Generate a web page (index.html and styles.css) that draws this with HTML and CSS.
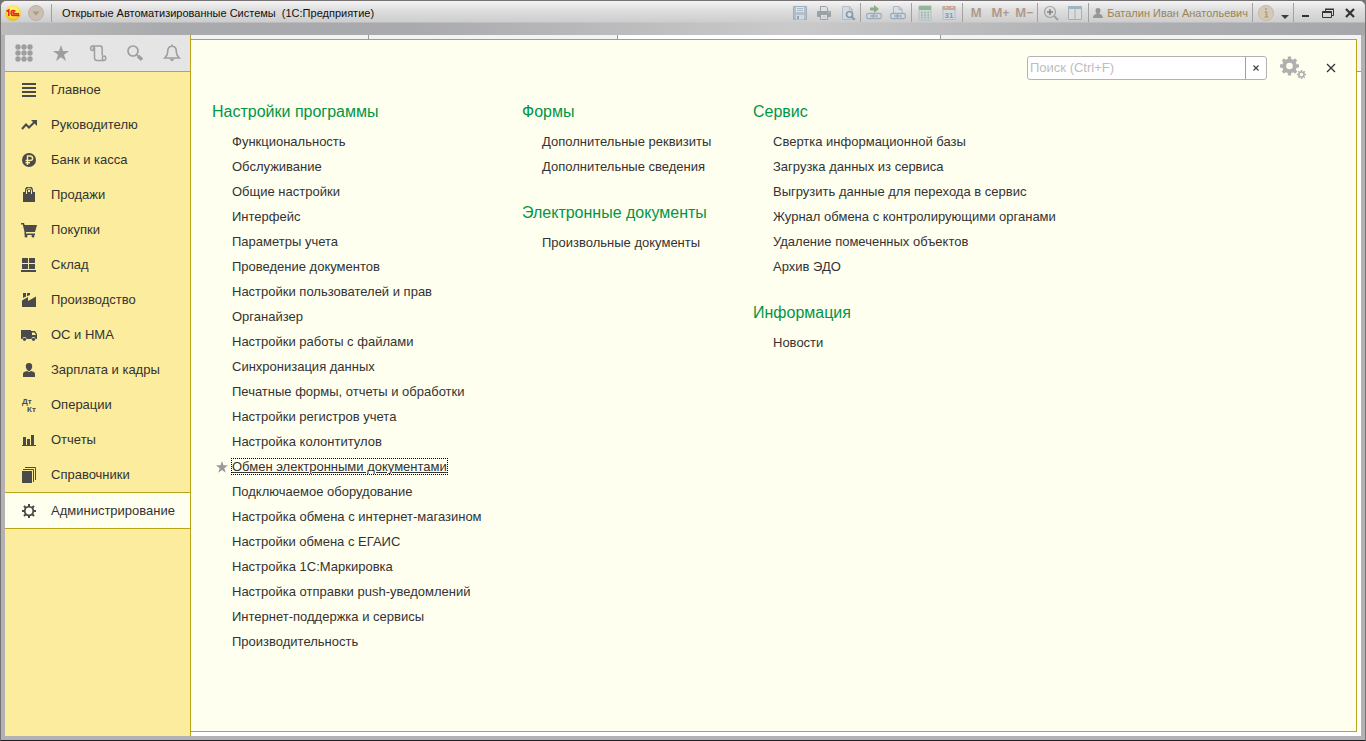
FILE: index.html
```html
<!DOCTYPE html>
<html lang="ru">
<head>
<meta charset="utf-8">
<title>Открытые Автоматизированные Системы (1С:Предприятие)</title>
<link rel="stylesheet" href="styles.css">
</head>
<body>
<div class="window">
  <header class="titlebar">
    <div class="title-left">
      <svg class="logo" viewBox="0 0 16 16" width="16" height="16"><defs><radialGradient id="lg" cx=".5" cy=".35" r=".65"><stop offset="0" stop-color="#fffab0"/><stop offset=".6" stop-color="#ffe53c"/><stop offset="1" stop-color="#e2b81c"/></radialGradient></defs><circle cx="8" cy="8" r="7.8" fill="url(#lg)"/><path d="M1.5 6.5 3.8 5v6M10.4 6.6C9.8 5 6 4.800 6 8c0 2.800 2 2.500 4 2.500h4.500M9.500 7.300c-2-.6-2 1.500-.5 1.500h5" fill="none" stroke="#e8231a" stroke-width="1.500"/></svg>
      <button class="round" aria-label="Главное меню"><svg viewBox="0 0 16 16" width="16" height="16"><circle cx="8" cy="8" r="7.500" fill="#c9bfb2" stroke="#bdb3a5"/><path d="M4.500 6.500h7L8 10.500z" fill="#a79b8b"/></svg></button>
      <h1 class="title">Открытые Автоматизированные Системы&nbsp; (1С:Предприятие)</h1>
    </div>
    <div class="group first muted">
      <button aria-label="Сохранить"><svg viewBox="0 0 16 16"><path d="M1.500 1.500h13v13h-13z" fill="#a9bac8" stroke="#8fa5b7"/><path d="M4 2h8v5H4z" fill="#dce3e8"/><path d="M5 3.500h6M5 5.500h6" stroke="#9db0bf"/><path d="M4 10h8v4.500H4z" fill="#d3dbe1"/><path d="M5 11h2v3H5z" fill="#7e97aa"/></svg></button>
      <button aria-label="Печать"><svg viewBox="0 0 16 16"><path d="M4.500 6V1.500H10l1.500 1.500v3" fill="#dfe2e4" stroke="#8b9299"/><rect x="1" y="6" width="14" height="6" rx="1" fill="#8b949c"/><path d="M4.500 9.500h7v5h-7z" fill="#dfe2e4" stroke="#8b949c"/><path d="M6 12h4M12 7.500h1.500" stroke="#b8c1c8"/></svg></button>
      <button aria-label="Предварительный просмотр"><svg viewBox="0 0 16 16"><path d="M2.500 1.500h7l3 3v10h-10z" fill="#d3dae0" stroke="#a7b7c4"/><path d="M9.500 1.500v3h3" fill="none" stroke="#a7b7c4"/><circle cx="9.500" cy="9.500" r="3" fill="#d7dfe6" stroke="#728a9e" stroke-width="1.700"/><path d="m11.700 11.700 3 3" stroke="#728a9e" stroke-width="2"/></svg></button>
    </div>
    <div class="group muted">
      <button aria-label="Получить ссылку"><svg viewBox="0 0 16 16"><path d="M4 2.500h4V0l5 4-5 4V5.500H4z" fill="#7a9e79"/><rect x=".7" y="8.500" width="8" height="5" rx="1.500" fill="#d9dfe4" stroke="#8fa3b3" stroke-width="1.300"/><rect x="7.300" y="8.500" width="8" height="5" rx="1.500" fill="#d9dfe4" stroke="#8fa3b3" stroke-width="1.300"/><path d="M4 11h8" stroke="#8698a6" stroke-width="1.300"/></svg></button>
      <button aria-label="Перейти по ссылке"><svg viewBox="0 0 16 16"><path d="M3.500 8V1.500H9l3 3V8" fill="#d9dfe4" stroke="#9aadbd"/><path d="M9 1.500v3h3" fill="none" stroke="#9aadbd"/><rect x=".7" y="8.500" width="8" height="5" rx="1.500" fill="#d9dfe4" stroke="#8ba2b4" stroke-width="1.300"/><rect x="7.300" y="8.500" width="8" height="5" rx="1.500" fill="#d9dfe4" stroke="#8ba2b4" stroke-width="1.300"/><path d="M4 11h8" stroke="#8397a7" stroke-width="1.300"/></svg></button>
    </div>
    <div class="group muted">
      <button aria-label="Калькулятор"><svg viewBox="0 0 16 16"><path d="M2 1h12v14H2z" fill="#ccd5da" stroke="#a9bac3"/><path d="M2 1h12v4H2z" fill="#82ab83"/><path d="M4 7.500h8M4 10h8M4 12.500h8" stroke="#82a887" stroke-width="1.400" stroke-dasharray="1.600"/></svg></button>
      <button aria-label="Календарь"><svg viewBox="0 0 16 16"><path d="M2 1.500h12v13H2z" fill="#d3dbe2" stroke="#a9b8c5"/><path d="M1.500 1h13v4h-13z" fill="#c39d87"/><path d="M4 2.500h2M10 2.500h2" stroke="#e6d8cf"/><text x="8" y="13" text-anchor="middle" class="day">31</text></svg></button>
    </div>
    <div class="group">
      <button class="mem">M</button><button class="mem">M+</button><button class="mem">M−</button>
    </div>
    <div class="group muted">
      <button aria-label="Масштаб"><svg viewBox="0 0 16 16"><circle cx="7" cy="7" r="5.500" fill="none" stroke="#929292" stroke-width="1.200"/><path d="M7 4v6M4 7h6" stroke="#666" stroke-width="1.400"/><path d="m11 11 4 4" stroke="#929292" stroke-width="2"/></svg></button>
      <button aria-label="Панели"><svg viewBox="0 0 16 16"><path d="M1.500 1.500h13v13h-13z" fill="#dadddf" stroke="#98a7b2"/><path d="M1 1h14v3H1z" fill="#93a9b9"/><path d="M8 4v10" stroke="#98a7b2"/></svg></button>
    </div>
    <div class="group user">
      <svg viewBox="0 0 16 16" width="10" height="12"><path d="M8 0c3 0 4 2 4 4S10.500 9 10 9.500c3 .5 6 2 6 6.500H0c0-4.500 3-6 6-6.500C5.500 9 4 6 4 4s1-4 4-4z" fill="#969696"/></svg>
      <a href="#" class="username">Баталин Иван Анатольевич</a>
    </div>
    <div class="group info">
      <button class="round" aria-label="Информация"><svg viewBox="0 0 16 16" width="16" height="16"><circle cx="8" cy="8" r="7.500" fill="#d5cab8" stroke="#c4b8a2"/><path d="M8 3v2M6.500 7H8.500v5M6.500 12h4" fill="none" stroke="#b3a283" stroke-width="1.700"/></svg></button>
      <button class="drop" aria-label="Ещё"><svg viewBox="0 0 16 16"><path d="M4 10h8l-4 4z" fill="#3d3d3d"/></svg></button>
    </div>
    <div class="group controls">
      <button aria-label="Свернуть"><svg viewBox="0 0 16 16"><path d="M4 11h7" stroke="#333" stroke-width="2"/></svg></button>
      <button aria-label="Восстановить"><svg viewBox="0 0 16 16"><path d="M5.500 6V4.500h8v6H12M5 4h9" fill="none" stroke="#333"/><path d="M2.500 6.500h9v6h-9zM2 7.500h9" fill="none" stroke="#333"/></svg></button>
      <button aria-label="Закрыть окно"><svg viewBox="0 0 16 16"><path d="m4 4 8 8M12 4l-8 8" stroke="#333" stroke-width="2.200"/></svg></button>
    </div>
  </header>

  <div class="workspace">
    <aside class="sidebar">
      <div class="tools">
        <button aria-label="Меню функций"><svg viewBox="0 0 18 18"><g fill="#9e9e9e"><circle cx="3" cy="3" r="2.700"/><circle cx="9" cy="3" r="2.700"/><circle cx="15" cy="3" r="2.700"/><circle cx="3" cy="9" r="2.700"/><circle cx="9" cy="9" r="2.700"/><circle cx="15" cy="9" r="2.700"/><circle cx="3" cy="15" r="2.700"/><circle cx="9" cy="15" r="2.700"/><circle cx="15" cy="15" r="2.700"/></g></svg></button>
        <button aria-label="Избранное"><svg viewBox="0 0 18 18"><path d="m9 1 2 6h6l-5 3.800 2 6.200-5-3.800L4 17l2-6.200L1 7h6z" fill="#9e9e9e"/></svg></button>
        <button aria-label="История"><svg viewBox="0 0 18 18"><path d="M3.500 6.500C1 6.500.8 2 3.500 2H11c2 0 2.200 1 2.200 2.500v7M3.500 2c1.500 0 2 1 2 2.500v9c0 2 1 3 2.500 3h6.500c3 0 3-4.500.5-4.500s-1.500 4-.5 4.500M3.500 6.500c1.500 0 1.500-2.500 0-2.500" fill="none" stroke="#9e9e9e" stroke-width="1.500"/></svg></button>
        <button aria-label="Поиск"><svg viewBox="0 0 18 18"><circle cx="7" cy="7" r="5" fill="none" stroke="#9e9e9e" stroke-width="1.700"/><path d="m10.500 10.500 2 2" stroke="#9e9e9e" stroke-width="1.500"/><path d="m12 12 4 3.800" stroke="#9e9e9e" stroke-width="3.500"/></svg></button>
        <button aria-label="Уведомления"><svg viewBox="0 0 18 18"><path d="M9 2.200c-3.500 0-4.300 2.500-4.300 5.300 0 4-1.200 4.500-3 6.500h14.600c-1.800-2-3-2.500-3-6.500 0-2.800-.8-5.300-4.300-5.300zM9 .5v2" fill="none" stroke="#9e9e9e" stroke-width="1.600"/><path d="M6.500 15h5L9 17.500z" fill="#9e9e9e"/></svg></button>
      </div>
      <nav class="sections" aria-label="Разделы">
        <a href="#"><svg viewBox="0 0 16 16"><path d="M1 2h14M1 6h14M1 10h14M1 14h14" stroke="#4a4a4a" stroke-width="2"/></svg>Главное</a>
        <a href="#"><svg viewBox="0 0 16 16"><path d="m1 12 4-4.500 3 3L13.500 5" fill="none" stroke="#4a4a4a" stroke-width="2"/><path d="M10 3h6v6z" fill="#4a4a4a"/></svg>Руководителю</a>
        <a href="#"><svg viewBox="0 0 16 16"><circle cx="8" cy="8" r="7" fill="#4a4a4a"/><path d="M6.500 13V4H9c3.500 0 3.500 4.500 0 4.500H4.500M4.500 10.700H9" fill="none" stroke="#fbec9e" stroke-width="1.400"/></svg>Банк и касса</a>
        <a href="#"><svg viewBox="0 0 16 16"><path d="M2 5h12v10H2z" fill="#4a4a4a"/><path d="M5.500 7.500V3.500c0-3.500 5-3.500 5 0v4" fill="none" stroke="#4a4a4a" stroke-width="3"/><path d="M5.500 7V3.500c0-3 5-3 5 0V7" fill="none" stroke="#fbec9e" stroke-width="1"/></svg>Продажи</a>
        <a href="#"><svg viewBox="0 0 16 16"><path d="M0 1h3l.6 2H16l-2 7H5v1.500h9V13H3.500v-3L1.800 2.500H0z" fill="#4a4a4a"/><circle cx="5" cy="14" r="1.500" fill="#4a4a4a"/><circle cx="12" cy="14" r="1.500" fill="#4a4a4a"/></svg>Покупки</a>
        <a href="#"><svg viewBox="0 0 16 16"><path d="M1 1h6v5H1zM8 1h6v5H8zM1 7h6v5H1zM8 7h6v5H8zM0 13h15v2H0z" fill="#4a4a4a"/></svg>Склад</a>
        <a href="#"><svg viewBox="0 0 16 16"><path d="M1 15V8.500L7 5v4l8-4.500V15zM2 1h3v3.500L2 6zM6 1h3v2L6 4.300z" fill="#4a4a4a"/></svg>Производство</a>
        <a href="#"><svg viewBox="0 0 16 16"><path d="M0 3h10v1h4l2 3v5H0z" fill="#4a4a4a"/><path d="M11 5.500h2.500L15 8h-4z" fill="#fbec9e"/><path d="M1.500 12a2 2 0 0 1 4 0zM10.500 12a2 2 0 0 1 4 0z" fill="#fbec9e"/><circle cx="3.500" cy="12.300" r="1.600" fill="#4a4a4a"/><circle cx="12.500" cy="12.300" r="1.600" fill="#4a4a4a"/></svg>ОС и НМА</a>
        <a href="#"><svg viewBox="0 0 16 16"><path d="M8 1c2.500 0 3.200 1.500 3.200 3.500S9.500 9 8 9 4.800 6.500 4.800 4.500 5.500 1 8 1zM2 15v-3c0-2 1.500-2.500 4-3l2 1 2-1c2.500.5 4 1 4 3v3z" fill="#4a4a4a"/></svg>Зарплата и кадры</a>
        <a href="#"><svg viewBox="0 0 16 16" class="dtkt"><text x="1" y="7">Дт</text><text x="6" y="15">Кт</text></svg>Операции</a>
        <a href="#"><svg viewBox="0 0 16 16"><path d="M1 13h14v1H1zM2 5h3v8H2zM6 7h3v6H6zM10 3h3v10h-3z" fill="#4a4a4a"/></svg>Отчеты</a>
        <a href="#"><svg viewBox="0 0 16 16"><path d="M1 4h10v12H1z" fill="#4a4a4a"/><path d="M2 2.500h10.500V15M4 .5h10.500V13" fill="none" stroke="#4a4a4a"/></svg>Справочники</a>
        <a href="#" class="active" aria-current="page"><svg viewBox="0 0 16 16"><circle cx="8" cy="8" r="4.300" fill="none" stroke="#4a4a4a" stroke-width="1.800"/><path d="M8 1v3M8 12v3M1 8h3M12 8h3M3 3l2 2M11 11l2 2M3 13l2-2M11 5l2-2" stroke="#4a4a4a" stroke-width="2"/></svg>Администрирование</a>
      </nav>
    </aside>

    <main class="main">
      <div class="tabs"><span class="tab t1"></span><span class="tab t2"></span><span class="tab t3"></span></div>
      <section class="panel">
        <div class="panel-head">
          <form class="search">
            <input type="text" placeholder="Поиск (Ctrl+F)" aria-label="Поиск">
            <button type="button" aria-label="Очистить"><svg viewBox="0 0 8 8" width="8" height="8"><path d="m1.500 1.500 5 5M6.500 1.500l-5 5" stroke="#444" stroke-width="1.200"/></svg></button>
          </form>
          <button class="gears" aria-label="Настройка"><svg viewBox="0 0 26 24" width="26" height="24"><g fill="none" stroke="#b0b0b0"><circle cx="9.500" cy="10" r="5.300" stroke-width="4"/><path d="M9.500.6v3.500M9.500 16v3.500M.1 10h3.500M15.400 10h3.500M2.900 3.400l2.400 2.400M13.700 14.200l2.400 2.400M2.900 16.600l2.400-2.400M13.700 5.800l2.400-2.400" stroke-width="3.400"/><circle cx="21.500" cy="18.500" r="2.500" stroke-width="1.600"/><path d="M21.500 14v2M21.500 21v2M17 18.500h2M24 18.500h2M18.300 15.300l1.400 1.400M23.300 20.300l1.400 1.400M18.300 21.700l1.400-1.400M23.300 16.700l1.400-1.400" stroke-width="1.500"/></g></svg></button>
          <button class="close" aria-label="Закрыть"><svg viewBox="0 0 10 10" width="10" height="10"><path d="m1 1 8 8M9 1 1 9" stroke="#333" stroke-width="1.300"/></svg></button>
        </div>
        <div class="columns">
          <div>
            <section class="block"><h2>Настройки программы</h2>
              <ul>
                <li><a href="#">Функциональность</a></li>
                <li><a href="#">Обслуживание</a></li>
                <li><a href="#">Общие настройки</a></li>
                <li><a href="#">Интерфейс</a></li>
                <li><a href="#">Параметры учета</a></li>
                <li><a href="#">Проведение документов</a></li>
                <li><a href="#">Настройки пользователей и прав</a></li>
                <li><a href="#">Органайзер</a></li>
                <li><a href="#">Настройки работы с файлами</a></li>
                <li><a href="#">Синхронизация данных</a></li>
                <li><a href="#">Печатные формы, отчеты и обработки</a></li>
                <li><a href="#">Настройки регистров учета</a></li>
                <li><a href="#">Настройка колонтитулов</a></li>
                <li class="focused"><svg viewBox="0 0 18 18" width="12" height="12"><path d="m9 0 2.200 6.500H18l-5.500 4.200 2 7L9 13.500l-5.500 4.200 2-7L0 6.500h6.800z" fill="#999"/></svg><a href="#">Обмен электронными документами</a></li>
                <li><a href="#">Подключаемое оборудование</a></li>
                <li><a href="#">Настройка обмена с интернет-магазином</a></li>
                <li><a href="#">Настройки обмена с ЕГАИС</a></li>
                <li><a href="#">Настройка 1С:Маркировка</a></li>
                <li><a href="#">Настройка отправки push-уведомлений</a></li>
                <li><a href="#">Интернет-поддержка и сервисы</a></li>
                <li><a href="#">Производительность</a></li>
              </ul>
            </section>
          </div>
          <div>
            <section class="block"><h2>Формы</h2>
              <ul>
                <li><a href="#">Дополнительные реквизиты</a></li>
                <li><a href="#">Дополнительные сведения</a></li>
              </ul>
            </section>
            <section class="block"><h2>Электронные документы</h2>
              <ul><li><a href="#">Произвольные документы</a></li></ul>
            </section>
          </div>
          <div>
            <section class="block"><h2>Сервис</h2>
              <ul>
                <li><a href="#">Свертка информационной базы</a></li>
                <li><a href="#">Загрузка данных из сервиса</a></li>
                <li><a href="#">Выгрузить данные для перехода в сервис</a></li>
                <li><a href="#">Журнал обмена с контролирующими органами</a></li>
                <li><a href="#">Удаление помеченных объектов</a></li>
                <li><a href="#">Архив ЭДО</a></li>
              </ul>
            </section>
            <section class="block"><h2>Информация</h2>
              <ul><li><a href="#">Новости</a></li></ul>
            </section>
          </div>
        </div>
      </section>
    </main>
  </div>
</div>
</body>
</html>
```

FILE: styles.css
```css
* { box-sizing: border-box; }

body {
  margin: 0;
  background: #767273;
  font: 13px/16px "Liberation Sans", Arial, sans-serif;
  color: #333;
}

button {
  display: flex;
  align-items: center;
  justify-content: center;
  padding: 0;
  border: 0;
  background: none;
  font: inherit;
  color: inherit;
}

a { color: inherit; text-decoration: none; }
svg { display: block; flex: none; }

.window {
  display: flex;
  flex-direction: column;
  min-height: 100vh;
  padding: 0 4px 4px;
  border: 1px solid #767273;
  border-bottom-color: #1d1d22;
  border-radius: 6px 6px 0 0;
  background:
    linear-gradient(#f4f4f4, #e0e0e0 8px, #cdcdce 21px, transparent 22px) top / 100% 34px no-repeat,
    linear-gradient(90deg, #bcbcbd, #a9aaad 12%, #a9aaad 30%, #cacaca 58%, #b0b1b4 80%, #a6a7aa) top / 100% 34px no-repeat,
    #b2b2b5;
}

/* Title bar */
.titlebar {
  display: flex;
  align-items: flex-start;
  height: 34px;
  padding-top: 2px;
}

.title-left {
  display: flex;
  flex: 1;
  align-items: center;
  gap: 7px;
  height: 19px;
}

.title {
  margin: 0;
  padding-left: 10px;
  border-left: 1px solid #a0a0a0;
  font-size: 11px;
  font-weight: normal;
  line-height: 18px;
  color: #111;
  white-space: nowrap;
}

.group {
  display: flex;
  align-items: center;
  height: 19px;
  padding: 0 1px;
  border-left: 1px solid #a2a2a3;
}

.group.first { border-left: 0; padding: 0; }
.group button { width: 24px; height: 19px; }
.group button svg { width: 16px; height: 16px; }
.group .mem { font: bold 12px/16px "Noto Sans", sans-serif; color: #b09a8c; }
.muted svg { opacity: .8; }
.day { font-size: 8px; font-weight: bold; fill: #71889b; }

.user { gap: 4px; padding: 0 4px; }
.username { font-size: 11px; color: #9c8450; white-space: nowrap; }
.info .drop { width: 14px; }
.group.controls { padding-right: 0; }
.controls button { width: 22px; }

/* Section list */
.workspace { display: flex; flex: 1; }

.sidebar {
  display: flex;
  flex: none;
  flex-direction: column;
  width: 186px;
  border-right: 1px solid #b9a516;
  background: #fbec9e;
}

.tools {
  display: grid;
  grid-template-columns: repeat(5, 1fr);
  height: 37px;
  border-bottom: 1px solid #a0a0a0;
  background: #e5e5e5;
}

.tools svg { width: 18px; height: 18px; }

.sections { display: flex; flex-direction: column; }

.sections a {
  display: flex;
  align-items: center;
  gap: 14px;
  height: 35px;
  padding-left: 16px;
}

.sections svg { width: 16px; height: 16px; }
.dtkt { font-size: 8px; font-weight: bold; fill: #4a4a4a; overflow: visible; }

.sections .active {
  height: 37px;
  border: solid #b9a516;
  border-width: 1px 0;
  background: #fffff0;
}

/* Function panel */
.main {
  display: flex;
  flex: 1;
  flex-direction: column;
  padding: 0 4px 4px 0;
  background: linear-gradient(#f3f3f3 36px, #999 36px, #999 37px, #fff 37px);
}

.tabs { display: flex; height: 4px; }
.tab { border-right: 1px solid #999; }
.t1 { width: 178px; }
.t2 { width: 249px; }
.t3 { width: 323px; background: #fff; }

.panel {
  flex: 1;
  border: solid #b9a516;
  border-width: 1px 1px 1px 0;
  background: #fffff0;
}

.panel-head {
  display: flex;
  justify-content: flex-end;
  gap: 13px;
  padding: 16px 13px 14px;
}

.search {
  display: flex;
  width: 240px;
  height: 24px;
  border: 1px solid #b3b3b3;
  border-radius: 3px;
  background: #fff;
}

.search input {
  flex: 1;
  min-width: 0;
  padding: 0 2px;
  border: 0;
  outline: 0;
  background: none;
  font: inherit;
}

.search input::placeholder { color: #bdbdbd; opacity: 1; }
.search button { width: 21px; border-left: 1px solid #a0a0a0; }
.close { width: 24px; }

.columns {
  display: grid;
  grid-template-columns: 310px 231px 1fr;
  padding-left: 21px;
}

.block { margin-bottom: 16px; }

h2 {
  margin: 0;
  font-size: 16px;
  font-weight: normal;
  line-height: 35px;
  color: #009646;
}

ul { margin: 0; padding: 0; list-style: none; }

li {
  display: flex;
  align-items: center;
  height: 25px;
  padding-left: 20px;
  white-space: nowrap;
}

.focused { gap: 4px; padding-left: 4px; }

.focused a {
  outline: 1px dotted #000;
  line-height: 15px;
  text-decoration: underline;
}
```
